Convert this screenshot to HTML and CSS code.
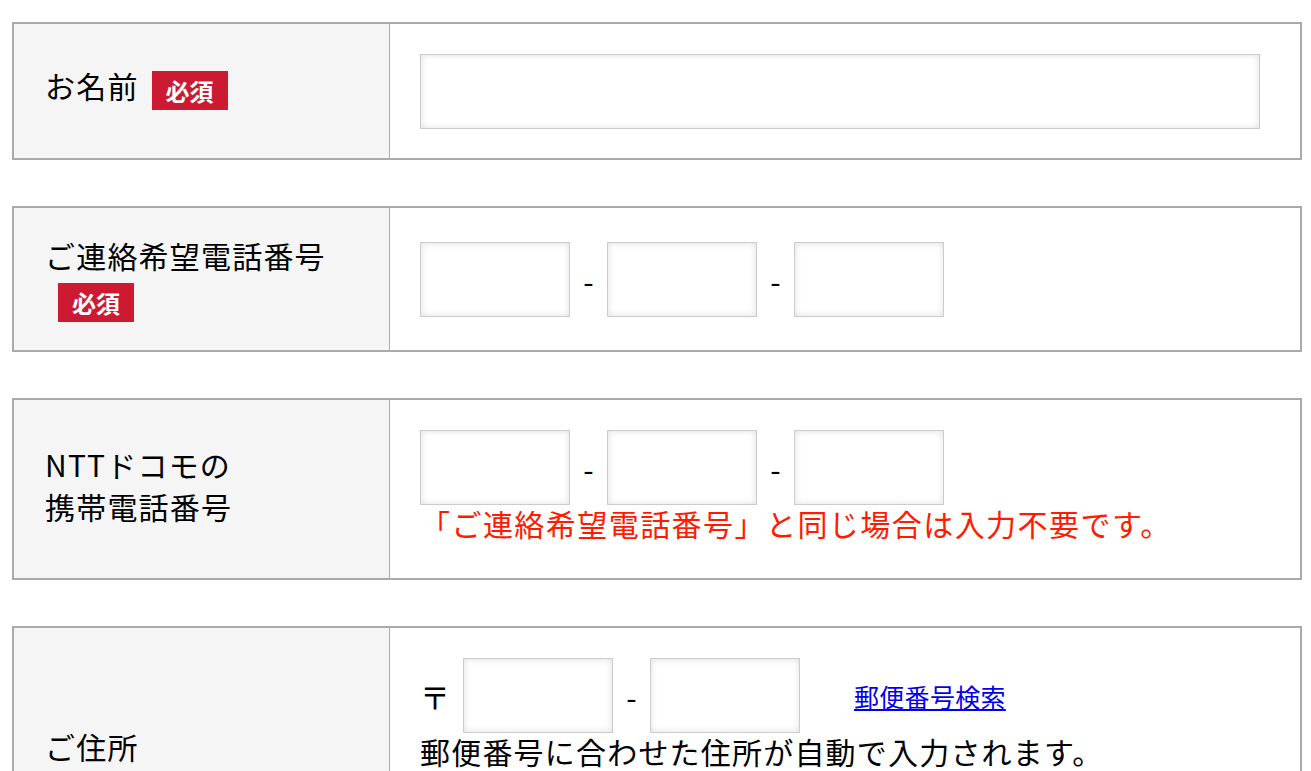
FILE: index.html
```html
<!DOCTYPE html>
<html lang="ja">
<head>
<meta charset="utf-8">
<title>お問い合わせフォーム</title>
<link rel="stylesheet" href="styles.css">
</head>
<body>
<div class="page">
  <table class="form-table">
    <tr>
      <th class="label">お名前<span class="req">必須</span></th>
      <td class="field"><input class="text-input wide" type="text"></td>
    </tr>
  </table>

  <table class="form-table">
    <tr>
      <th class="label label-tight">ご連絡希望電話番号<span class="req">必須</span></th>
      <td class="field">
        <div class="tel-row">
          <input class="text-input short" type="text"><span class="dash">-</span><input class="text-input short" type="text"><span class="dash">-</span><input class="text-input short" type="text">
        </div>
      </td>
    </tr>
  </table>

  <table class="form-table">
    <tr>
      <th class="label">NTTドコモの<br>携帯電話番号</th>
      <td class="field">
        <div class="tel-row">
          <input class="text-input short" type="text"><span class="dash">-</span><input class="text-input short" type="text"><span class="dash">-</span><input class="text-input short" type="text">
        </div>
        <p class="note-red">「ご連絡希望電話番号」と同じ場合は入力不要です。</p>
      </td>
    </tr>
  </table>

  <table class="form-table">
    <tr>
      <th class="label">ご住所</th>
      <td class="field">
        <div class="tel-row">
          <span class="postal-mark">〒</span><input class="text-input short" type="text"><span class="dash">-</span><input class="text-input short" type="text"><a class="zip-link" href="#">郵便番号検索</a>
        </div>
        <p class="note">郵便番号に合わせた住所が自動で入力されます。</p>
        <input class="text-input wide addr" type="text">
      </td>
    </tr>
  </table>
</div>
</body>
</html>
```

FILE: styles.css
```css
html, body {
  margin: 0;
  padding: 0;
  background: #ffffff;
}

body {
  font-family: "Noto Sans CJK JP", "Noto Sans", sans-serif;
  font-size: 30px;
  color: #000000;
  letter-spacing: 1.2px;
}

.page {
  padding: 22px 9px 40px 12px;
}

.form-table {
  width: 1290px;
  table-layout: fixed;
  border-collapse: separate;
  border-spacing: 0;
  border: 2px solid #aaaaaa;
  margin: 0 0 46px 0;
}

.label {
  box-sizing: border-box;
  width: 376px;
  background: #f5f5f5;
  border-right: 1px solid #aaaaaa;
  font-weight: normal;
  text-align: left;
  vertical-align: middle;
  line-height: 42px;
  padding: 26px 30px 34px 31px;
}

.label-tight {
  padding-bottom: 28px;
}

.req {
  display: inline-block;
  margin-left: 13px;
  padding: 0 14px;
  height: 39px;
  line-height: 39px;
  vertical-align: -3px;
  background: #cc1a33;
  color: #ffffff;
  font-size: 24px;
  font-weight: bold;
  letter-spacing: 0;
}

.field {
  vertical-align: middle;
  line-height: 44px;
  padding: 30px 30px 29px 30px;
  background: #ffffff;
}

.text-input {
  box-sizing: border-box;
  display: block;
  height: 75px;
  margin: 0;
  border: 1px solid #cccccc;
  background: #ffffff;
  box-shadow: inset 0 0 7px rgba(0, 0, 0, 0.13);
  font-family: inherit;
  font-size: 24px;
}

.wide {
  width: 840px;
}

.short {
  width: 150px;
}

.tel-row {
  display: flex;
  align-items: center;
  letter-spacing: 0;
}

.dash {
  width: 37px;
  text-align: center;
}

.note-red {
  margin: 0 0 8px 0;
  line-height: 36px;
  color: #ff1a00;
  letter-spacing: 1.45px;
}

.note {
  margin: 0 0 8px 0;
  line-height: 36px;
}

.postal-mark {
  width: 30px;
  margin-right: 13px;
}

.zip-link {
  margin-left: 54px;
  font-size: 25px;
  line-height: 30px;
  color: #0000ee;
  text-decoration: underline;
  letter-spacing: 0.3px;
}

.addr {
  height: 66px;
}
```
